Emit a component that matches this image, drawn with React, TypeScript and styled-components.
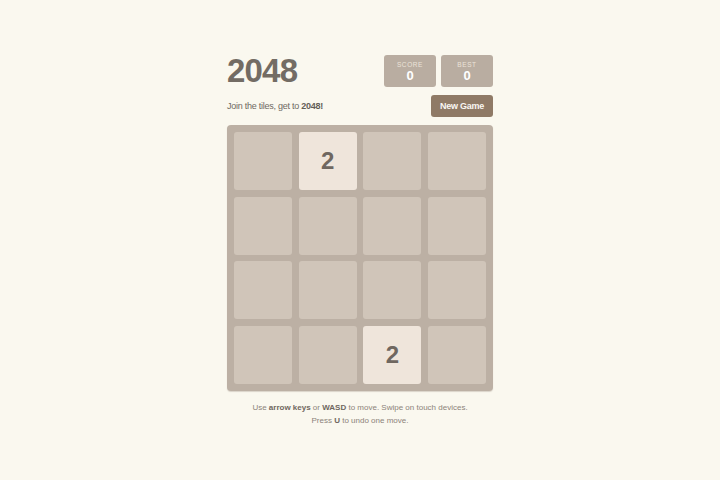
import React from "react";
import styled, { createGlobalStyle } from "styled-components";

const Global = createGlobalStyle`
  html, body {
    margin: 0;
    padding: 0;
    background: #faf8ef;
    font-family: "Liberation Sans", Arial, sans-serif;
  }
`;

const Page = styled.div`
  width: 266px;
  margin: 0 auto;
  padding-top: 55px;
  display: flex;
  flex-direction: column;
`;

const HeaderRow = styled.div`
  display: flex;
  align-items: center;
  justify-content: space-between;
  height: 32px;
`;

const Title = styled.h1`
  margin: 0;
  font-size: 33px;
  font-weight: 700;
  letter-spacing: -0.8px;
  color: #736c64;
  line-height: 32px;
`;

const Scores = styled.div`
  display: flex;
  gap: 5px;
`;

const ScoreBox = styled.div`
  width: 52px;
  height: 32px;
  box-sizing: border-box;
  background: #b9ada1;
  border-radius: 3px;
  display: flex;
  flex-direction: column;
  align-items: center;
  justify-content: center;
  padding-top: 1px;
`;

const ScoreLabel = styled.div`
  font-size: 6.5px;
  letter-spacing: 0.6px;
  text-transform: uppercase;
  color: #ece3d9;
  line-height: 8px;
`;

const ScoreValue = styled.div`
  font-size: 13px;
  font-weight: 700;
  color: #ffffff;
  line-height: 14px;
`;

const SubRow = styled.div`
  display: flex;
  align-items: center;
  justify-content: space-between;
  margin-top: 8px;
  height: 22px;
`;

const Intro = styled.p`
  margin: 0;
  font-size: 9px;
  letter-spacing: -0.25px;
  color: #6f6962;
  b {
    font-weight: 700;
    color: #645e57;
  }
`;

const NewGame = styled.button`
  width: 62px;
  height: 22px;
  border: none;
  border-radius: 3px;
  background: #8f7a66;
  color: #f9f6f2;
  font-family: "Liberation Sans", Arial, sans-serif;
  font-weight: 700;
  font-size: 9px;
  letter-spacing: -0.25px;
  padding: 0;
  cursor: pointer;
`;

const Board = styled.div`
  margin-top: 8px;
  width: 266px;
  height: 266px;
  box-sizing: border-box;
  padding: 7px;
  background: #bcb0a4;
  border-radius: 4px;
  display: grid;
  grid-template-columns: repeat(4, 1fr);
  grid-template-rows: repeat(4, 1fr);
  gap: 6.67px;
  box-shadow: 0 1px 1px rgba(120, 105, 90, 0.25);
`;

const Tile = styled.div<{ $value: number }>`
  border-radius: 3px;
  background: ${(p) => (p.$value === 2 ? "#efe5db" : "#d0c5b9")};
  display: flex;
  align-items: center;
  justify-content: center;
  font-size: 24px;
  font-weight: 700;
  color: #6f6760;
`;

const Footer = styled.div`
  margin-top: 10px;
  text-align: center;
  font-size: 8px;
  line-height: 13px;
  color: #8c837a;
  b {
    font-weight: 700;
    color: #6f6760;
  }
`;

const cells = [
  0, 2, 0, 0,
  0, 0, 0, 0,
  0, 0, 0, 0,
  0, 0, 2, 0,
];

export default function App() {
  return (
    <>
      <Global />
      <Page>
        <HeaderRow>
          <Title>2048</Title>
          <Scores>
            <ScoreBox>
              <ScoreLabel>Score</ScoreLabel>
              <ScoreValue>0</ScoreValue>
            </ScoreBox>
            <ScoreBox>
              <ScoreLabel>Best</ScoreLabel>
              <ScoreValue>0</ScoreValue>
            </ScoreBox>
          </Scores>
        </HeaderRow>
        <SubRow>
          <Intro>
            Join the tiles, get to <b>2048!</b>
          </Intro>
          <NewGame>New Game</NewGame>
        </SubRow>
        <Board>
          {cells.map((v, i) => (
            <Tile key={i} $value={v}>
              {v ? v : ""}
            </Tile>
          ))}
        </Board>
        <Footer>
          Use <b>arrow keys</b> or <b>WASD</b> to move. Swipe on touch devices.
          <br />
          Press <b>U</b> to undo one move.
        </Footer>
      </Page>
    </>
  );
}
